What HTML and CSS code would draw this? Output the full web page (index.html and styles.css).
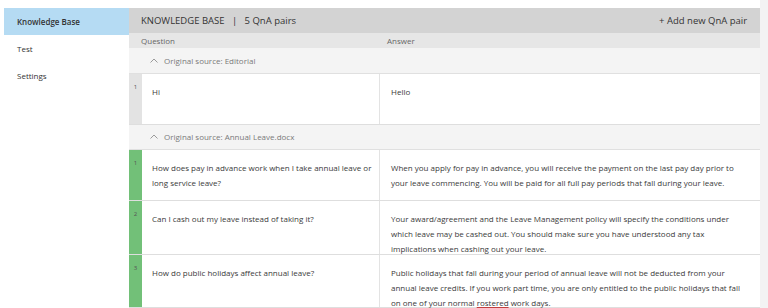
FILE: index.html
```html
<!DOCTYPE html>
<html lang='en'>
<head>
	<meta charset='UTF-8'>
	<title>QnA Maker - Knowledge Base</title>
	<link rel="stylesheet" href="styles.css">
</head>
<body>
	<div class='page'>
		<div class='app'>
			<nav class='side-nav'>
				<div class='nav-item selected'>Knowledge Base</div>
				<div class='nav-item'>Test</div>
				<div class='nav-item'>Settings</div>
			</nav>

			<div class='kb-box'>
				<div class='kb-header'>
					<span class='kb-title'>KNOWLEDGE BASE &nbsp;&nbsp;|&nbsp;&nbsp; 5 QnA pairs</span>
					<span class='kb-add'>+ Add new QnA pair</span>
				</div>
				<div class='kb-cols'>
					<div class='col-q'>Question</div>
					<div class='col-a'>Answer</div>
				</div>

				<div class='source-row'>
					<svg class='chevron' width='8' height='5' viewBox='0 0 8 5'><polyline points='0.5,4.5 4,1 7.5,4.5' fill='none' stroke='#9a9a9a' stroke-width='1'/></svg>
					<span>Original source: Editorial</span>
				</div>
				<div class='qna-row'>
					<div class='qna-num'>1</div>
					<div class='qna-q'>Hi</div>
					<div class='qna-a'>Hello</div>
				</div>

				<div class='source-row'>
					<svg class='chevron' width='8' height='5' viewBox='0 0 8 5'><polyline points='0.5,4.5 4,1 7.5,4.5' fill='none' stroke='#9a9a9a' stroke-width='1'/></svg>
					<span>Original source: Annual Leave.docx</span>
				</div>
				<div class='qna-row'>
					<div class='qna-num green'>1</div>
					<div class='qna-q'>How does pay in advance work when I take annual leave or long service leave?</div>
					<div class='qna-a'>When you apply for pay in advance, you will receive the payment on the last pay day prior to your leave commencing. You will be paid for all full pay periods that fall during your leave.</div>
				</div>
				<div class='qna-row'>
					<div class='qna-num green'>2</div>
					<div class='qna-q'>Can I cash out my leave instead of taking it?</div>
					<div class='qna-a'>Your award/agreement and the Leave Management policy will specify the conditions under which leave may be cashed out. You should make sure you have understood any tax implications when cashing out your leave.</div>
				</div>
				<div class='qna-row'>
					<div class='qna-num green'>3</div>
					<div class='qna-q'>How do public holidays affect annual leave?</div>
					<div class='qna-a'>Public holidays that fall during your period of annual leave will not be deducted from your annual leave credits. If you work part time, you are only entitled to the public holidays that fall on one of your normal <span class='spell'>rostered</span> work days.</div>
				</div>
			</div>
		</div>
		<div class='gutter'></div>
	</div>
</body>
</html>
```

FILE: styles.css
```css
html, body{
	margin:0;
	height:100%;
	overflow:hidden;
	font-family: "Open Sans", "Noto Sans", Arial, sans-serif;
	font-size:8px;
	color:#3a3a3a;
	background-color:white;
}
.page{
	display:flex;
	height:100%;
}
.app{
	flex:1 1 auto;
	display:flex;
	padding:8px 0 0 4px;
}
.gutter{
	width:13px;
	background-color:#f3f3f3;
}
.side-nav{
	width:125px;
	flex:0 0 125px;
	display:flex;
	flex-direction:column;
}
.nav-item{
	height:27px;
	line-height:27px;
	padding-left:13px;
	color:#333;
}
.nav-item.selected{
	background-color:#b5dbf3;
	font-weight:600;
}
.kb-box{
	flex:1 1 auto;
	display:flex;
	flex-direction:column;
}
.kb-header{
	display:flex;
	justify-content:space-between;
	align-items:center;
	height:27px;
	padding:0 13px 0 12px;
	background-color:#d3d3d3;
	font-size:9.5px;
	color:#333;
}
.kb-cols{
	display:flex;
	height:15px;
	line-height:15px;
	background-color:#e6e6e6;
	color:#666;
}
.col-q{
	width:243px;
	padding-left:12px;
}
.col-a{
	padding-left:3px;
}
.source-row{
	display:flex;
	align-items:center;
	height:26px;
	padding-left:21px;
	background-color:#f4f4f4;
	color:#7a7a7a;
	border-bottom:1px solid #e0e0e0;
}
.chevron{
	margin-right:6px;
}
.qna-row{
	display:flex;
	min-height:50px;
	background-color:white;
	border-bottom:1px solid #dedede;
	line-height:15px;
}
.qna-num{
	width:13px;
	flex:0 0 13px;
	background-color:#e3e3e3;
	font-size:6px;
	text-align:center;
	padding-top:8px;
	line-height:10px;
	color:#555;
}
.qna-num.green{
	background-color:#72c078;
}
.qna-q{
	width:223px;
	flex:0 0 223px;
	padding:10px 4px 1px 10px;
	border-right:1px solid #e3e3e3;
}
.qna-a{
	flex:1 1 auto;
	padding:10px 14px 1px 11px;
}
.spell{
	display:inline-block;
	line-height:13px;
	text-decoration:underline;
	text-decoration-color:#c04040;
}
```
